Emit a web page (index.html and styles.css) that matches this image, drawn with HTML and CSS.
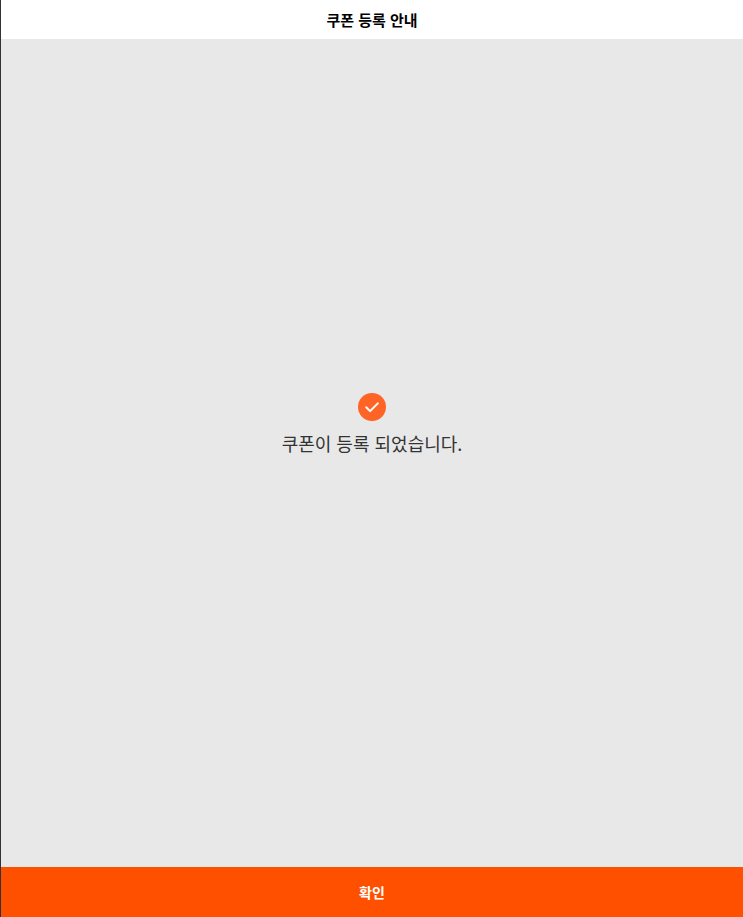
FILE: index.html
```html
<!DOCTYPE html>
<html lang="ko">
<head>
<meta charset="utf-8">
<title>쿠폰 등록 안내</title>
<link rel="stylesheet" href="styles.css">
</head>
<body>
<div class="edge"></div>
<div class="page">
  <header class="header">쿠폰 등록 안내</header>
  <main class="content">
    <svg class="check" viewBox="0 0 28 28" aria-hidden="true">
      <circle cx="14" cy="14" r="14" fill="#ff6427"/>
      <path d="M8.2 14.3l3.9 3.8 7.7-7.7" fill="none" stroke="#fff" stroke-width="2" stroke-linecap="round" stroke-linejoin="round"/>
    </svg>
    <p class="message">쿠폰이 등록 되었습니다.</p>
  </main>
  <button class="confirm" type="button">확인</button>
</div>
</body>
</html>
```
FILE: styles.css
```css
* { box-sizing: border-box; }
html, body { height: 100%; margin: 0; }
body {
  display: flex;
  overflow: hidden;
  font-family: "Noto Sans CJK KR", "Liberation Sans", sans-serif;
  background: #e8e8e8;
}
.edge { flex: 0 0 1px; background: #333; }
.page { flex: 1; display: flex; flex-direction: column; min-width: 0; }
.header {
  height: 39px;
  flex: none;
  display: flex;
  align-items: center;
  justify-content: center;
  background: #fff;
  color: #000;
  font-size: 15px;
  font-weight: 700;
}
.content {
  flex: 1;
  display: flex;
  flex-direction: column;
  align-items: center;
  padding-top: 354px;
}
.check { width: 28px; height: 28px; display: block; }
.message {
  margin: 9px 0 0;
  font-size: 18px;
  line-height: 26px;
  color: #333;
}
.confirm {
  flex: none;
  height: 50px;
  border: 0;
  padding: 0;
  background: #ff5000;
  color: #fff;
  font: 700 14px "Noto Sans CJK KR", "Liberation Sans", sans-serif;
}
```
